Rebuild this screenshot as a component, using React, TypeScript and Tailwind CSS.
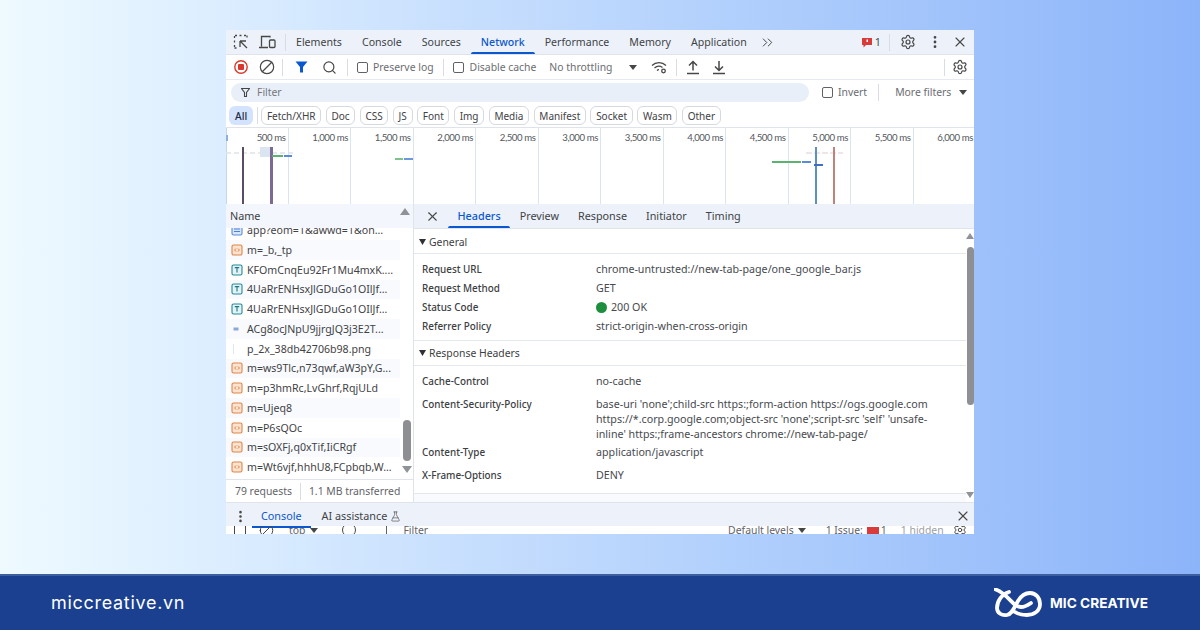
import React from "react";
import { Ban, ChevronsRight, EllipsisVertical, FlaskConical, Search, Settings, X } from "lucide-react";

const TABS = ["Elements", "Console", "Sources", "Network", "Performance", "Memory", "Application"];
const CHIPS = ["Fetch/XHR", "Doc", "CSS", "JS", "Font", "Img", "Media", "Manifest", "Socket", "Wasm", "Other"];
const TICKS = ["500 ms", "1,000 ms", "1,500 ms", "2,000 ms", "2,500 ms", "3,000 ms", "3,500 ms", "4,000 ms", "4,500 ms", "5,000 ms", "5,500 ms", "6,000 ms"];
const DETAIL_TABS = ["Headers", "Preview", "Response", "Initiator", "Timing"];

const FILES = [
  { name: "app?eom=1&awwd=1&on...", kind: "doc" },
  { name: "m=_b,_tp", kind: "js" },
  { name: "KFOmCnqEu92Fr1Mu4mxK....", kind: "font" },
  { name: "4UaRrENHsxJlGDuGo1OIlJf...", kind: "font" },
  { name: "4UaRrENHsxJlGDuGo1OIlJf...", kind: "font" },
  { name: "ACg8ocJNpU9jjrgJQ3j3E2T...", kind: "img" },
  { name: "p_2x_38db42706b98.png", kind: "png" },
  { name: "m=ws9Tlc,n73qwf,aW3pY,G...", kind: "js" },
  { name: "m=p3hmRc,LvGhrf,RqjULd", kind: "js" },
  { name: "m=Ujeq8", kind: "js" },
  { name: "m=P6sQOc", kind: "js" },
  { name: "m=sOXFj,q0xTif,IiCRgf", kind: "js" },
  { name: "m=Wt6vjf,hhhU8,FCpbqb,W...", kind: "js" },
];

function FileIcon({ kind }: { kind: string }) {
  if (kind === "js")
    return (
      <svg width="12" height="12" viewBox="0 0 12 12" className="shrink-0">
        <rect x="1" y="1" width="10" height="10" rx="1.5" fill="#fbe3d0" stroke="#e0844a" strokeWidth="1.1" />
        <path d="M5 4.5 3.6 6 5 7.5M7 4.5 8.4 6 7 7.5" fill="none" stroke="#d9702f" strokeWidth="0.9" />
      </svg>
    );
  if (kind === "font")
    return (
      <svg width="12" height="12" viewBox="0 0 12 12" className="shrink-0">
        <rect x="1" y="1" width="10" height="10" rx="1.5" fill="#e3f3f5" stroke="#25889a" strokeWidth="1.1" />
        <path d="M3.8 3.6h4.4M6 3.6v5" fill="none" stroke="#1c7686" strokeWidth="1.1" />
      </svg>
    );
  if (kind === "doc")
    return (
      <svg width="12" height="12" viewBox="0 0 12 12" className="shrink-0">
        <rect x="1" y="1" width="10" height="10" rx="1.5" fill="#d8e6fb" stroke="#5b8bd6" strokeWidth="1.1" />
        <path d="M3 5h6M3 7.5h6" stroke="#3f74c9" strokeWidth="0.9" />
      </svg>
    );
  if (kind === "img")
    return (
      <svg width="12" height="12" viewBox="0 0 12 12" className="shrink-0">
        <rect x="2.5" y="4.5" width="5" height="3" fill="#8aa9d8" />
      </svg>
    );
  return (
    <svg width="12" height="12" viewBox="0 0 12 12" className="shrink-0">
      <path d="M2.5 1v10" stroke="#e2e6ec" strokeWidth="1" />
    </svg>
  );
}

function Check() {
  return <span className="block w-[11px] h-[11px] shrink-0 rounded-[2px] border border-[#5f6368] bg-white" />;
}

function Sep({ className }: { className: string }) {
  return <span className={"block w-px h-[17px] shrink-0 bg-[#d8dde5] " + className} />;
}

function Caret({ className }: { className: string }) {
  return (
    <svg width="8" height="5" viewBox="0 0 8 5" className={"shrink-0 " + className}>
      <path d="M0 0h8L4 5z" fill="#444746" />
    </svg>
  );
}

function SectionHead({ title, className }: { title: string; className: string }) {
  return (
    <div className={"flex items-center border-b border-[#e3e7ee] pl-[5px] text-[10.4px] text-[#3c4043] " + className}>
      <svg width="7" height="6" viewBox="0 0 7 6" className="mr-[3px] shrink-0">
        <path d="M0 0h7L3.5 6z" fill="#303134" />
      </svg>
      {title}
    </div>
  );
}

function Field({ label, className, children }: { label: string; className: string; children: React.ReactNode }) {
  return (
    <div className={"flex " + className}>
      <div className="w-[182px] shrink-0 pl-[8px] text-[9.9px] font-medium text-[#3c4043]">{label}</div>
      <div className="text-[10.7px] text-[#474a4f] whitespace-nowrap">{children}</div>
    </div>
  );
}

export default function App() {
  return (
    <div className="w-[1200px] h-[630px] overflow-hidden flex flex-col font-['Noto_Sans',sans-serif] text-[10.8px] leading-[14px]">
      <div className="h-[574px] shrink-0 pt-[30px] flex justify-center bg-gradient-to-r from-[#eefaff] to-[#8cb4f9]">
        <div className="w-[748px] h-[504px] bg-white flex flex-col overflow-hidden text-[#474a4f]">
          {/* main tab bar */}
          <div className="h-[25px] shrink-0 flex items-center bg-[#edf2fa] border-b border-[#dfe4ec]">
            <svg width="16" height="16" viewBox="0 0 16 16" className="ml-[7px] shrink-0" fill="none" stroke="#474747" strokeWidth="1.3">
              <path d="M1.5 4V1.5H4M6.5 1.5h2M11 1.5h3V4M1.5 6.5v2M1.5 11v3H4" strokeDasharray="2 1" />
              <path d="M7 7h6M7 7v6M7 7l7 7" />
            </svg>
            <svg width="17" height="15" viewBox="0 0 17 15" className="ml-[10px] shrink-0" fill="none" stroke="#474747" strokeWidth="1.3">
              <path d="M11 2.5V1.500H2.500v10M0 12.500h9" />
              <rect x="10.500" y="5" width="5.500" height="7.500" rx="1" />
            </svg>
            <Sep className="ml-[9px]" />
            <div className="flex h-full text-[10.6px]">
              {TABS.map((t) =>
                t === "Network" ? (
                  <div key={t} className="relative px-[10px] flex items-center text-[#0b57d0] font-medium">
                    {t}
                    <span className="absolute left-0 right-0 bottom-0 h-[2px] rounded-t-sm bg-[#0b57d0]" />
                  </div>
                ) : (
                  <div key={t} className="px-[10px] flex items-center text-[#3f4246]">
                    {t}
                  </div>
                )
              )}
            </div>
            <ChevronsRight size={17} strokeWidth={1.4} className="text-[#474747] ml-[2px] shrink-0" />
            <svg width="12" height="11" viewBox="0 0 12 11" className="ml-auto shrink-0">
              <path d="M1 1h10v7H5L2.500 10.500V8H1z" fill="#d93a3a" />
              <rect x="5.500" y="2.500" width="1.500" height="2.500" fill="#fff" />
            </svg>
            <span className="ml-[2px] text-[#474a4f]">1</span>
            <Sep className="ml-[8px]" />
            <Settings size={16} strokeWidth={1.8} className="ml-[10px] text-[#474747] shrink-0" />
            <EllipsisVertical size={16} strokeWidth={2.2} className="ml-[11px] text-[#474747] shrink-0" />
            <X size={16} strokeWidth={1.7} className="ml-[9px] mr-[6px] text-[#474747] shrink-0" />
          </div>

          {/* network toolbar */}
          <div className="h-[25px] shrink-0 flex items-center border-b border-[#e6eaf0] text-[10.4px]">
            <svg width="14" height="14" viewBox="0 0 14 14" className="ml-[8px] shrink-0">
              <circle cx="7" cy="7" r="6.200" fill="none" stroke="#d9382e" strokeWidth="1.400" />
              <rect x="4" y="4" width="6" height="6" rx="1" fill="#d9382e" />
            </svg>
            <Ban size={16} strokeWidth={1.8} className="ml-[11px] text-[#474747] shrink-0 -scale-x-100" />
            <Sep className="ml-[7px]" />
            <svg width="13" height="12" viewBox="0 0 13 12" className="ml-[12px] shrink-0">
              <path d="M0.500 0.500h12L8 6v5.500H5V6z" fill="#0b57d0" />
            </svg>
            <Search size={15} strokeWidth={1.9} className="ml-[14px] text-[#474747] shrink-0" />
            <Sep className="ml-[10px]" />
            <span className="ml-[9px]"><Check /></span>
            <span className="ml-[5px] text-[#6a6d72]">Preserve log</span>
            <Sep className="ml-[9px]" />
            <span className="ml-[9px]"><Check /></span>
            <span className="ml-[6px] text-[#6a6d72]">Disable cache</span>
            <span className="ml-[13px] text-[#6a6d72]">No throttling</span>
            <Caret className="ml-[17px]" />
            <svg width="16" height="13" viewBox="0 0 16 13" className="ml-[14px] shrink-0" fill="none" stroke="#474747" strokeWidth="1.300">
              <path d="M1 4.500a10 10 0 0 1 14 0M3.500 7a6.500 6.500 0 0 1 8 -.5M6 9.500a3 3 0 0 1 2 -.8" />
              <circle cx="12.500" cy="10" r="1.800" />
            </svg>
            <Sep className="ml-[9px]" />
            <svg width="14" height="15" viewBox="0 0 14 15" className="ml-[9px] shrink-0" fill="none" stroke="#474747" strokeWidth="1.500">
              <path d="M7 1.500v9M3 5.500l4-4 4 4M1 13.500h12" />
            </svg>
            <svg width="14" height="15" viewBox="0 0 14 15" className="ml-[12px] shrink-0" fill="none" stroke="#474747" strokeWidth="1.500">
              <path d="M7 1v9.500M3 6.500l4 4 4-4M1 13.500h12" />
            </svg>
            <Sep className="ml-auto" />
            <Settings size={16} strokeWidth={1.8} className="ml-[7px] mr-[6px] text-[#474747] shrink-0" />
          </div>

          {/* filter row */}
          <div className="h-[24px] shrink-0 flex items-center pl-[5px] text-[10.4px]">
            <div className="w-[578px] h-[19px] rounded-full bg-[#e9eff9] flex items-center pl-[10px]">
              <svg width="9" height="9" viewBox="0 0 9 9" className="shrink-0">
                <path d="M0.500 0.500h8L5.500 4.500V8.500H3.500V4.500z" fill="none" stroke="#444746" strokeWidth="1.100" />
              </svg>
              <span className="ml-[7px] text-[#73767b]">Filter</span>
            </div>
            <span className="ml-[13px]"><Check /></span>
            <span className="ml-[5px] text-[#6a6d72]">Invert</span>
            <Sep className="ml-[11px]" />
            <span className="ml-[16px] text-[#6a6d72]">More filters</span>
            <Caret className="ml-[8px]" />
          </div>

          {/* resource type chips */}
          <div className="h-[24px] shrink-0 flex items-center pl-[3px] border-b border-[#dfe4ec] text-[10px]">
            <span className="h-[19px] px-[6px] flex items-center rounded-[6px] bg-[#d3e3fd] text-[10.2px] text-[#1f2a44] font-medium">All</span>
            <Sep className="ml-[4px] mr-[3px]" />
            <div className="flex gap-[4.500px]">
              {CHIPS.map((c) => (
                <span key={c} className="h-[19px] px-[4.700px] flex items-center rounded-[6px] border border-[#d5d9e0] text-[#3f4246]">
                  {c}
                </span>
              ))}
            </div>
          </div>

          {/* overview timeline */}
          <div className="relative h-[76px] shrink-0 flex overflow-hidden font-['Lato',sans-serif] text-[9.600px] tracking-[-0.4px] text-[#54575c]">
            {TICKS.map((t) => (
              <div key={t} className="w-[62.500px] shrink-0 h-full border-r border-[#dbe5f2] text-right pr-[2px] pt-[3px] whitespace-nowrap">
                {t}
              </div>
            ))}
            <svg width="748" height="76" viewBox="0 0 748 76" className="absolute left-0 top-0">
              <rect x="0" y="0" width="1" height="76" fill="#c5d6ee" />
              <rect x="0" y="7" width="2" height="6" fill="#8fb0dc" />
              <path d="M0 25h34M38 25h30" stroke="#dfe3e8" strokeWidth="1.500" strokeDasharray="5 3" />
              <rect x="34" y="19" width="10" height="10" fill="#dbe5f2" />
              <rect x="16" y="19" width="2" height="57" fill="#5c4a66" />
              <rect x="44" y="19" width="3" height="57" fill="#7a6a94" />
              <rect x="46" y="27" width="11" height="2" fill="#5cb270" />
              <rect x="58" y="27" width="8" height="2" fill="#5b8bd6" />
              <rect x="169" y="30" width="8" height="2" fill="#7cc48b" />
              <rect x="178" y="30" width="9" height="2" fill="#6f98da" />
              <path d="M580 25h37" stroke="#e7dedf" strokeWidth="1.500" strokeDasharray="6 2" />
              <rect x="546" y="33" width="29" height="2" fill="#5cb270" />
              <rect x="576" y="33" width="9" height="2" fill="#5b8bd6" />
              <rect x="589" y="19" width="2" height="57" fill="#5f8fbf" />
              <rect x="588" y="36" width="9" height="2" fill="#3e6fc4" />
              <rect x="607" y="19" width="2" height="57" fill="#c08279" />
            </svg>
          </div>

          {/* requests and detail panel */}
          <div className="h-[298px] shrink-0 flex">
            <div className="w-[188px] shrink-0 flex flex-col border-r border-[#dfe4ec]">
              <div className="h-[24px] shrink-0 bg-[#f3f6fc] flex items-center justify-between pl-[4px] pr-[3px] text-[#3c4043]">
                <span>Name</span>
                <svg width="10" height="7" viewBox="0 0 10 7" className="self-start mt-[4px] shrink-0"><path d="M5 0l5 7H0z" fill="#8f9296" /></svg>
              </div>
              <div className="flex-1 min-h-0 flex overflow-hidden">
                <div className="w-[174px] shrink-0 overflow-hidden text-[10.6px]">
                  {FILES.map((f, i) => (
                    <div
                      key={i}
                      className={
                        "h-[19.750px] flex items-center pl-[5px] whitespace-nowrap text-[#3f4246] first:-mt-[7.750px] " +
                        (i % 2 === 0 ? "bg-white" : "bg-[#f8fafd]")
                      }
                    >
                      <FileIcon kind={f.kind} />
                      <span className="ml-[4px]">{f.name}</span>
                    </div>
                  ))}
                </div>
                <div className="flex-1 flex flex-col items-center pb-[6px]">
                  <div className="mt-auto w-[8px] h-[41px] rounded-full bg-[#8d8f92]" />
                  <svg width="10" height="7" viewBox="0 0 10 7" className="mt-[5px] shrink-0"><path d="M0 0h10L5 7z" fill="#8f9296" /></svg>
                </div>
              </div>
              <div className="h-[23px] shrink-0 flex items-center pl-[9px] border-t border-[#dfe4ec] text-[10.400px] text-[#5f6368] whitespace-nowrap">
                79 requests
                <Sep className="mx-[8px]" />
                1.1 MB transferred
              </div>
            </div>

            <div className="flex-1 min-w-0 flex flex-col">
              <div className="h-[25px] shrink-0 flex items-center bg-[#edf2fa] border-b border-[#dfe4ec]">
                <X size={15} strokeWidth={1.7} className="ml-[11px] mr-[8px] text-[#474747] shrink-0" />
                <div className="flex h-full">
                  {DETAIL_TABS.map((t) =>
                    t === "Headers" ? (
                      <div key={t} className="relative px-[9.500px] flex items-center text-[#0b57d0] font-medium">
                        {t}
                        <span className="absolute left-0 right-0 bottom-0 h-[2px] rounded-t-sm bg-[#0b57d0]" />
                      </div>
                    ) : (
                      <div key={t} className="px-[9.500px] flex items-center text-[#3f4246]">
                        {t}
                      </div>
                    )
                  )}
                </div>
              </div>
              <div className="flex-1 min-h-0 flex">
                <div className="flex-1 min-w-0 overflow-hidden">
                  <SectionHead title="General" className="h-[25px] pt-[1px]" />
                  <Field label="Request URL" className="mt-[8px] h-[19px]">chrome-untrusted://new-tab-page/one_google_bar.js</Field>
                  <Field label="Request Method" className="h-[19px]">GET</Field>
                  <Field label="Status Code" className="h-[19px]">
                    <span className="flex items-center">
                      <span className="block w-[11px] h-[11px] rounded-full bg-[#1e8e3e] mr-[4px]" />
                      200 OK
                    </span>
                  </Field>
                  <Field label="Referrer Policy" className="h-[21px]">strict-origin-when-cross-origin</Field>
                  <SectionHead title="Response Headers" className="h-[26px] border-t" />
                  <Field label="Cache-Control" className="mt-[8px] h-[23px]">no-cache</Field>
                  <Field label="Content-Security-Policy" className="h-[48px] leading-[15px]">
                    <span className="block">base-uri 'none';child-src https:;form-action https://ogs.google.com</span>
                    <span className="block">https://*.corp.google.com;object-src 'none';script-src 'self' 'unsafe-</span>
                    <span className="block">inline' https:;frame-ancestors chrome://new-tab-page/</span>
                  </Field>
                  <Field label="Content-Type" className="h-[23px]">application/javascript</Field>
                  <Field label="X-Frame-Options" className="h-[25px]">DENY</Field>
                  <div className="h-[9px] border-t border-[#e3e7ee] bg-[#f8fafd]" />
                </div>
                <div className="w-[8px] shrink-0 flex flex-col items-center pt-[4px]">
                  <svg width="8" height="6" viewBox="0 0 8 6" className="shrink-0"><path d="M4 0l4 6H0z" fill="#8f9296" /></svg>
                  <div className="mt-[8px] w-[7px] h-[158px] rounded-full bg-[#8d8f92]" />
                  <svg width="8" height="6" viewBox="0 0 8 6" className="mt-[87px] shrink-0"><path d="M0 0h8L4 6z" fill="#8f9296" /></svg>
                </div>
              </div>
            </div>
          </div>

          {/* drawer */}
          <div className="h-[24px] shrink-0 flex items-center bg-[#edf2fa] pt-[3px] border-t border-[#dfe4ec]">
            <EllipsisVertical size={15} strokeWidth={2.2} className="ml-[7px] text-[#474747] shrink-0" />
            <div className="relative ml-[13px] text-[#0b57d0]">
              Console
              <span className="absolute -left-[9px] -right-[9px] -bottom-[5px] h-[2px] bg-[#0b57d0]" />
            </div>
            <span className="ml-[20px] text-[#3f4246]">AI assistance</span>
            <FlaskConical size={11} strokeWidth={1.400} className="ml-[3px] text-[#474747] shrink-0" />
            <X size={16} strokeWidth={1.700} className="ml-auto mr-[3px] text-[#474747] shrink-0" />
          </div>
          <div className="h-[8px] shrink-0 flex items-center overflow-hidden bg-white text-[10.400px] text-[#5f6368] whitespace-nowrap">
            <span className="ml-[8px] block w-[12px] h-[14px] border border-[#474747] shrink-0" />
            <Ban size={15} strokeWidth={1.600} className="ml-[13px] text-[#474747] shrink-0 -scale-x-100" />
            <span className="ml-[15px]">top</span>
            <Caret className="ml-[5px]" />
            <span className="ml-[24px] block w-[14px] h-[14px] rounded-full border border-[#474747] shrink-0" />
            <span className="ml-[30px] block w-px h-[14px] bg-[#5f6368] shrink-0" />
            <span className="ml-[16px]">Filter</span>
            <span className="ml-[300px]">Default levels</span>
            <Caret className="ml-[4px]" />
            <span className="ml-[20px]">1 Issue:</span>
            <span className="ml-[4px] block w-[12px] h-[7px] bg-[#d93a3a] shrink-0" />
            <span className="ml-[2px]">1</span>
            <span className="ml-[14px] text-[#9aa0a6]">1 hidden</span>
            <Settings size={14} strokeWidth={1.700} className="ml-[9px] text-[#474747] shrink-0" />
          </div>
        </div>
      </div>

      {/* footer */}
      <div className="h-[56px] shrink-0 bg-[#1a408f] border-t-[2px] border-[#3d5f9f] flex items-center justify-between pl-[51px] pr-[52px] text-white">
        <span className="text-[18px] leading-[22px] tracking-[0.7px] font-['Inter',sans-serif]">miccreative.vn</span>
        <div className="flex items-center">
          <svg width="48" height="30" viewBox="0 0 48 30" className="shrink-0" fill="none" stroke="#fff" strokeWidth="3.800" strokeLinecap="round">
            <path d="M1.500 1.500C8 3 14 10 20 16c4 4 10 4 17-1" />
            <path d="M15 4C8 6 3 13 3 20c0 5 5 8 10 7 5-1 7-7 11-14 3-5 7-8 12-8 6 0 10 5 10 11 0 7-6 11-13 11-5 0-9-1-12-3" />
          </svg>
          <span className="ml-[8px] text-[13.700px] leading-[18px] font-bold font-['Inter',sans-serif]">MIC CREATIVE</span>
        </div>
      </div>
    </div>
  );
}
